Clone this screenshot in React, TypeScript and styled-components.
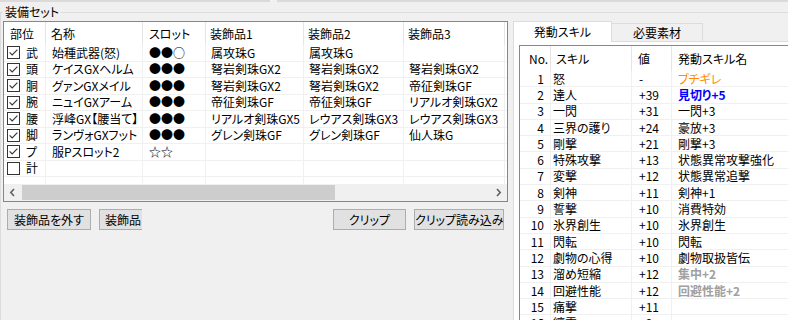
import React from "react";
import styled, { createGlobalStyle } from "styled-components";

const FONT = `"Noto Sans CJK JP", "Noto Sans", sans-serif`;

const GlobalStyle = createGlobalStyle`
  html, body { margin: 0; padding: 0; background: #f0f0f0; }
  body {
    font-family: ${FONT};
    font-size: 12px;
    color: #000;
    font-feature-settings: "palt";
  }
  #root { width: 788px; height: 320px; overflow: hidden; }
  * { box-sizing: border-box; }
`;

const Screen = styled.div`
  width: 788px;
  height: 320px;
  overflow: hidden;
  display: flex;
  flex-direction: column;
`;

const TopStrip = styled.div`
  height: 2px;
  display: flex;
  flex: none;
`;

const StripSegment = styled.div<{ $w?: number; $gap?: number }>`
  height: 2px;
  background: #dadada;
  margin-left: ${(p) => p.$gap ?? 0}px;
  ${(p) => (p.$w ? `width:${p.$w}px;` : "flex:1;")}
`;

const GroupBox = styled.fieldset`
  margin: 2px 0 0 0;
  padding: 1px 0 0 2px;
  border: 1px solid #dcdcdc;
  border-right: none;
  border-bottom: none;
  min-width: 0;
  flex: 1;
`;

const GroupLegend = styled.legend`
  padding: 0 2px;
  line-height: 16px;
  font-size: 12px;
`;

const GroupBody = styled.div`
  display: flex;
  align-items: flex-start;
`;

const LeftPane = styled.div`
  width: 505px;
  flex: none;
  display: flex;
  flex-direction: column;
`;

const ListView = styled.div`
  height: 181px;
  border: 1px solid #828790;
  background: #fff;
  display: flex;
  flex-direction: column;
  overflow: hidden;
`;

const ListGrid = styled.div`
  flex: 1;
  display: flex;
  flex-direction: column;
  overflow: hidden;
`;

const Row = styled.div<{ $cols: string; $h: number; $grow?: boolean }>`
  display: grid;
  grid-template-columns: ${(p) => p.$cols};
  height: ${(p) => p.$h}px;
  flex: ${(p) => (p.$grow ? "1" : "none")};
`;

const HeadCell = styled.div<{ $pl?: number }>`
  border-right: 1px solid #e5e5e5;
  padding-left: ${(p) => p.$pl ?? 6}px;
  display: flex;
  align-items: center;
  white-space: nowrap;
  overflow: hidden;
  line-height: 16px;
`;

const Cell = styled.div<{
  $pl?: number;
  $pr?: number;
  $right?: boolean;
  $color?: string;
  $bold?: boolean;
  $noBottom?: boolean;
  $mono?: boolean;
}>`
  border-right: 1px solid #f0f0f0;
  border-bottom: ${(p) => (p.$noBottom ? "none" : "1px solid #f0f0f0")};
  padding-left: ${(p) => p.$pl ?? 6}px;
  padding-right: ${(p) => p.$pr ?? 0}px;
  display: flex;
  align-items: center;
  justify-content: ${(p) => (p.$right ? "flex-end" : "flex-start")};
  white-space: nowrap;
  overflow: hidden;
  line-height: 16px;
  color: ${(p) => p.$color ?? "#000"};
  font-weight: ${(p) => (p.$bold ? 700 : 400)};
  ${(p) => (p.$mono ? `font-feature-settings: normal;` : "")}
`;

const PartCell = styled(Cell)`
  padding-left: 3px;
  gap: 6px;
`;

const CheckSvg = styled.svg`
  flex: none;
  display: block;
`;

const Check = ({ on }: { on: boolean }) => (
  <CheckSvg width="13" height="13" viewBox="0 0 13 13">
    <rect x="0.5" y="0.5" width="12" height="12" fill="#fff" stroke="#333" />
    {on && (
      <polyline
        points="2.6,6.4 5.2,9 10.4,3.6"
        fill="none"
        stroke="#333"
        strokeWidth="1.1"
      />
    )}
  </CheckSvg>
);

const ScrollBar = styled.div`
  height: 17px;
  flex: none;
  display: flex;
  background: #f0f0f0;
`;

const ScrollArrow = styled.div`
  width: 17px;
  flex: none;
  display: flex;
  align-items: center;
  justify-content: center;
`;

const ScrollTrack = styled.div`
  flex: 1;
  display: flex;
`;

const ScrollThumb = styled.div<{ $w: number }>`
  width: ${(p) => p.$w}px;
  margin: 1px 0 1px 1px;
  background: #cdcdcd;
`;

const Chevron = ({ dir }: { dir: "left" | "right" }) => (
  <svg width="7" height="9" viewBox="0 0 7 9">
    <polyline
      points={dir === "left" ? "5,1 1.8,4.5 5,8" : "2,1 5.2,4.5 2,8"}
      fill="none"
      stroke="#606060"
      strokeWidth="1.6"
    />
  </svg>
);

const ButtonBar = styled.div`
  display: flex;
  justify-content: space-between;
  margin-top: 7px;
  padding: 0 4px;
`;

const ButtonGroup = styled.div`
  display: flex;
  gap: 8px;
`;

const Button = styled.button<{ $w: number; $clipped?: boolean }>`
  width: ${(p) => p.$w}px;
  height: 21px;
  padding: ${(p) => (p.$clipped ? "0 0 0 5px" : "0")};
  border: 1px solid #adadad;
  ${(p) => (p.$clipped ? "border-right: none;" : "")}
  background: #e1e1e1;
  font-family: ${FONT};
  font-size: 12px;
  font-feature-settings: "palt";
  color: #000;
  line-height: 18px;
  text-align: ${(p) => (p.$clipped ? "left" : "center")};
  white-space: nowrap;
  overflow: hidden;
`;

const RightPane = styled.div`
  margin-left: 5px;
  flex: 1;
  min-width: 0;
  overflow: hidden;
  display: flex;
  flex-direction: column;
`;

const TabStrip = styled.div`
  height: 20px;
  display: flex;
  align-items: flex-end;
`;

const Tab = styled.div<{ $active?: boolean; $w: number }>`
  width: ${(p) => p.$w}px;
  height: ${(p) => (p.$active ? 21 : 18)}px;
  margin-bottom: ${(p) => (p.$active ? -1 : 0)}px;
  margin-left: ${(p) => (p.$active ? 0 : -1)}px;
  position: relative;
  z-index: ${(p) => (p.$active ? 1 : 0)};
  background: ${(p) => (p.$active ? "#fff" : "#f0f0f0")};
  border: 1px solid #dcdcdc;
  border-bottom: none;
  display: flex;
  align-items: center;
  justify-content: center;
  line-height: 16px;
  white-space: nowrap;
`;

const TabPanel = styled.div`
  height: 300px;
  background: #fff;
  border: 1px solid #dcdcdc;
  border-right: none;
  padding: 3px 0 0 5px;
`;

const SkillList = styled.div`
  width: 300px;
  height: 290px;
  border: 1px solid #828790;
  border-right: none;
  background: #fff;
  display: flex;
  flex-direction: column;
  overflow: hidden;
`;

const LEFT_COLS = "42px 97px 63px 98px 100px 101px 80px";
const SKILL_COLS = "31px 81px 40px 180px";

type Equip = {
  part: string;
  on: boolean;
  name: string;
  slots: string;
  d1: string;
  d2: string;
  d3: string;
};

const equips: Equip[] = [
  { part: "武", on: true, name: "始種武器(怒)", slots: "●●○", d1: "属攻珠G", d2: "属攻珠G", d3: "" },
  { part: "頭", on: true, name: "ケイスGXヘルム", slots: "●●●", d1: "弩岩剣珠GX2", d2: "弩岩剣珠GX2", d3: "弩岩剣珠GX2" },
  { part: "胴", on: true, name: "グァンGXメイル", slots: "●●●", d1: "弩岩剣珠GX2", d2: "弩岩剣珠GX2", d3: "帝征剣珠GF" },
  { part: "腕", on: true, name: "ニュイGXアーム", slots: "●●●", d1: "帝征剣珠GF", d2: "帝征剣珠GF", d3: "リアルオ剣珠GX2" },
  { part: "腰", on: true, name: "浮峰GX【腰当て】", slots: "●●●", d1: "リアルオ剣珠GX5", d2: "レウアス剣珠GX3", d3: "レウアス剣珠GX3" },
  { part: "脚", on: true, name: "ランヴォGXフット", slots: "●●●", d1: "グレン剣珠GF", d2: "グレン剣珠GF", d3: "仙人珠G" },
  { part: "プ", on: true, name: "服Pスロット2", slots: "☆☆", d1: "", d2: "", d3: "" },
  { part: "計", on: false, name: "", slots: "", d1: "", d2: "", d3: "" },
];

type Skill = {
  no: number;
  skill: string;
  value: string;
  result: string;
  color?: string;
  bold?: boolean;
};

const skills: Skill[] = [
  { no: 1, skill: "怒", value: "-", result: "ブチギレ", color: "#ff8c00" },
  { no: 2, skill: "達人", value: "+39", result: "見切り+5", color: "#0000ff", bold: true },
  { no: 3, skill: "一閃", value: "+31", result: "一閃+3" },
  { no: 4, skill: "三界の護り", value: "+24", result: "豪放+3" },
  { no: 5, skill: "剛撃", value: "+21", result: "剛撃+3" },
  { no: 6, skill: "特殊攻撃", value: "+13", result: "状態異常攻撃強化" },
  { no: 7, skill: "変撃", value: "+12", result: "状態異常追撃" },
  { no: 8, skill: "剣神", value: "+11", result: "剣神+1" },
  { no: 9, skill: "誓撃", value: "+10", result: "消費特効" },
  { no: 10, skill: "氷界創生", value: "+10", result: "氷界創生" },
  { no: 11, skill: "閃転", value: "+10", result: "閃転" },
  { no: 12, skill: "劇物の心得", value: "+10", result: "劇物取扱皆伝" },
  { no: 13, skill: "溜め短縮", value: "+12", result: "集中+2", color: "#a0a0a0", bold: true },
  { no: 14, skill: "回避性能", value: "+12", result: "回避性能+2", color: "#a0a0a0", bold: true },
  { no: 15, skill: "痛撃", value: "+11", result: "" },
  { no: 16, skill: "纏雷", value: "+9", result: "" },
];

export default function App() {
  return (
    <>
      <GlobalStyle />
      <Screen>
        <TopStrip>
          <StripSegment $w={270} />
          <StripSegment $gap={7} />
        </TopStrip>
        <GroupBox>
          <GroupLegend>装備セット</GroupLegend>
          <GroupBody>
            <LeftPane>
              <ListView>
                <ListGrid>
                  <Row $cols={LEFT_COLS} $h={23}>
                    <HeadCell>部位</HeadCell>
                    <HeadCell $pl={5}>名称</HeadCell>
                    <HeadCell>スロット</HeadCell>
                    <HeadCell $pl={4}>装飾品1</HeadCell>
                    <HeadCell $pl={4}>装飾品2</HeadCell>
                    <HeadCell $pl={4}>装飾品3</HeadCell>
                    <HeadCell $pl={4}>装飾品4</HeadCell>
                  </Row>
                  {equips.map((e) => (
                    <Row key={e.part} $cols={LEFT_COLS} $h={16.5}>
                      <PartCell>
                        <Check on={e.on} />
                        <span>{e.part}</span>
                      </PartCell>
                      <Cell>{e.name}</Cell>
                      <Cell $mono>{e.slots}</Cell>
                      <Cell $pl={5}>{e.d1}</Cell>
                      <Cell $pl={5}>{e.d2}</Cell>
                      <Cell $pl={5}>{e.d3}</Cell>
                      <Cell />
                    </Row>
                  ))}
                  <Row $cols={LEFT_COLS} $h={0} $grow>
                    {Array.from({ length: 7 }).map((_, i) => (
                      <Cell key={i} $noBottom />
                    ))}
                  </Row>
                </ListGrid>
                <ScrollBar>
                  <ScrollArrow>
                    <Chevron dir="left" />
                  </ScrollArrow>
                  <ScrollTrack>
                    <ScrollThumb $w={313} />
                  </ScrollTrack>
                  <ScrollArrow>
                    <Chevron dir="right" />
                  </ScrollArrow>
                </ScrollBar>
              </ListView>
              <ButtonBar>
                <ButtonGroup>
                  <Button $w={84}>装飾品を外す</Button>
                  <Button $w={43} $clipped>
                    装飾品
                  </Button>
                </ButtonGroup>
                <ButtonGroup>
                  <Button $w={73}>クリップ</Button>
                  <Button $w={90}>クリップ読み込み</Button>
                </ButtonGroup>
              </ButtonBar>
            </LeftPane>
            <RightPane>
              <TabStrip>
                <Tab $active $w={99}>
                  発動スキル
                </Tab>
                <Tab $w={92}>必要素材</Tab>
              </TabStrip>
              <TabPanel>
                <SkillList>
                  <Row $cols={SKILL_COLS} $h={25}>
                    <HeadCell $pl={9}>No.</HeadCell>
                    <HeadCell $pl={5}>スキル</HeadCell>
                    <HeadCell $pl={6}>値</HeadCell>
                    <HeadCell $pl={6}>発動スキル名</HeadCell>
                  </Row>
                  {skills.map((s) => (
                    <Row key={s.no} $cols={SKILL_COLS} $h={16.3}>
                      <Cell $right $pl={0} $pr={6}>
                        {s.no}
                      </Cell>
                      <Cell $pl={2}>{s.skill}</Cell>
                      <Cell $pl={7}>{s.value}</Cell>
                      <Cell $pl={6} $color={s.color} $bold={s.bold}>
                        {s.result}
                      </Cell>
                    </Row>
                  ))}
                </SkillList>
              </TabPanel>
            </RightPane>
          </GroupBody>
        </GroupBox>
      </Screen>
    </>
  );
}
